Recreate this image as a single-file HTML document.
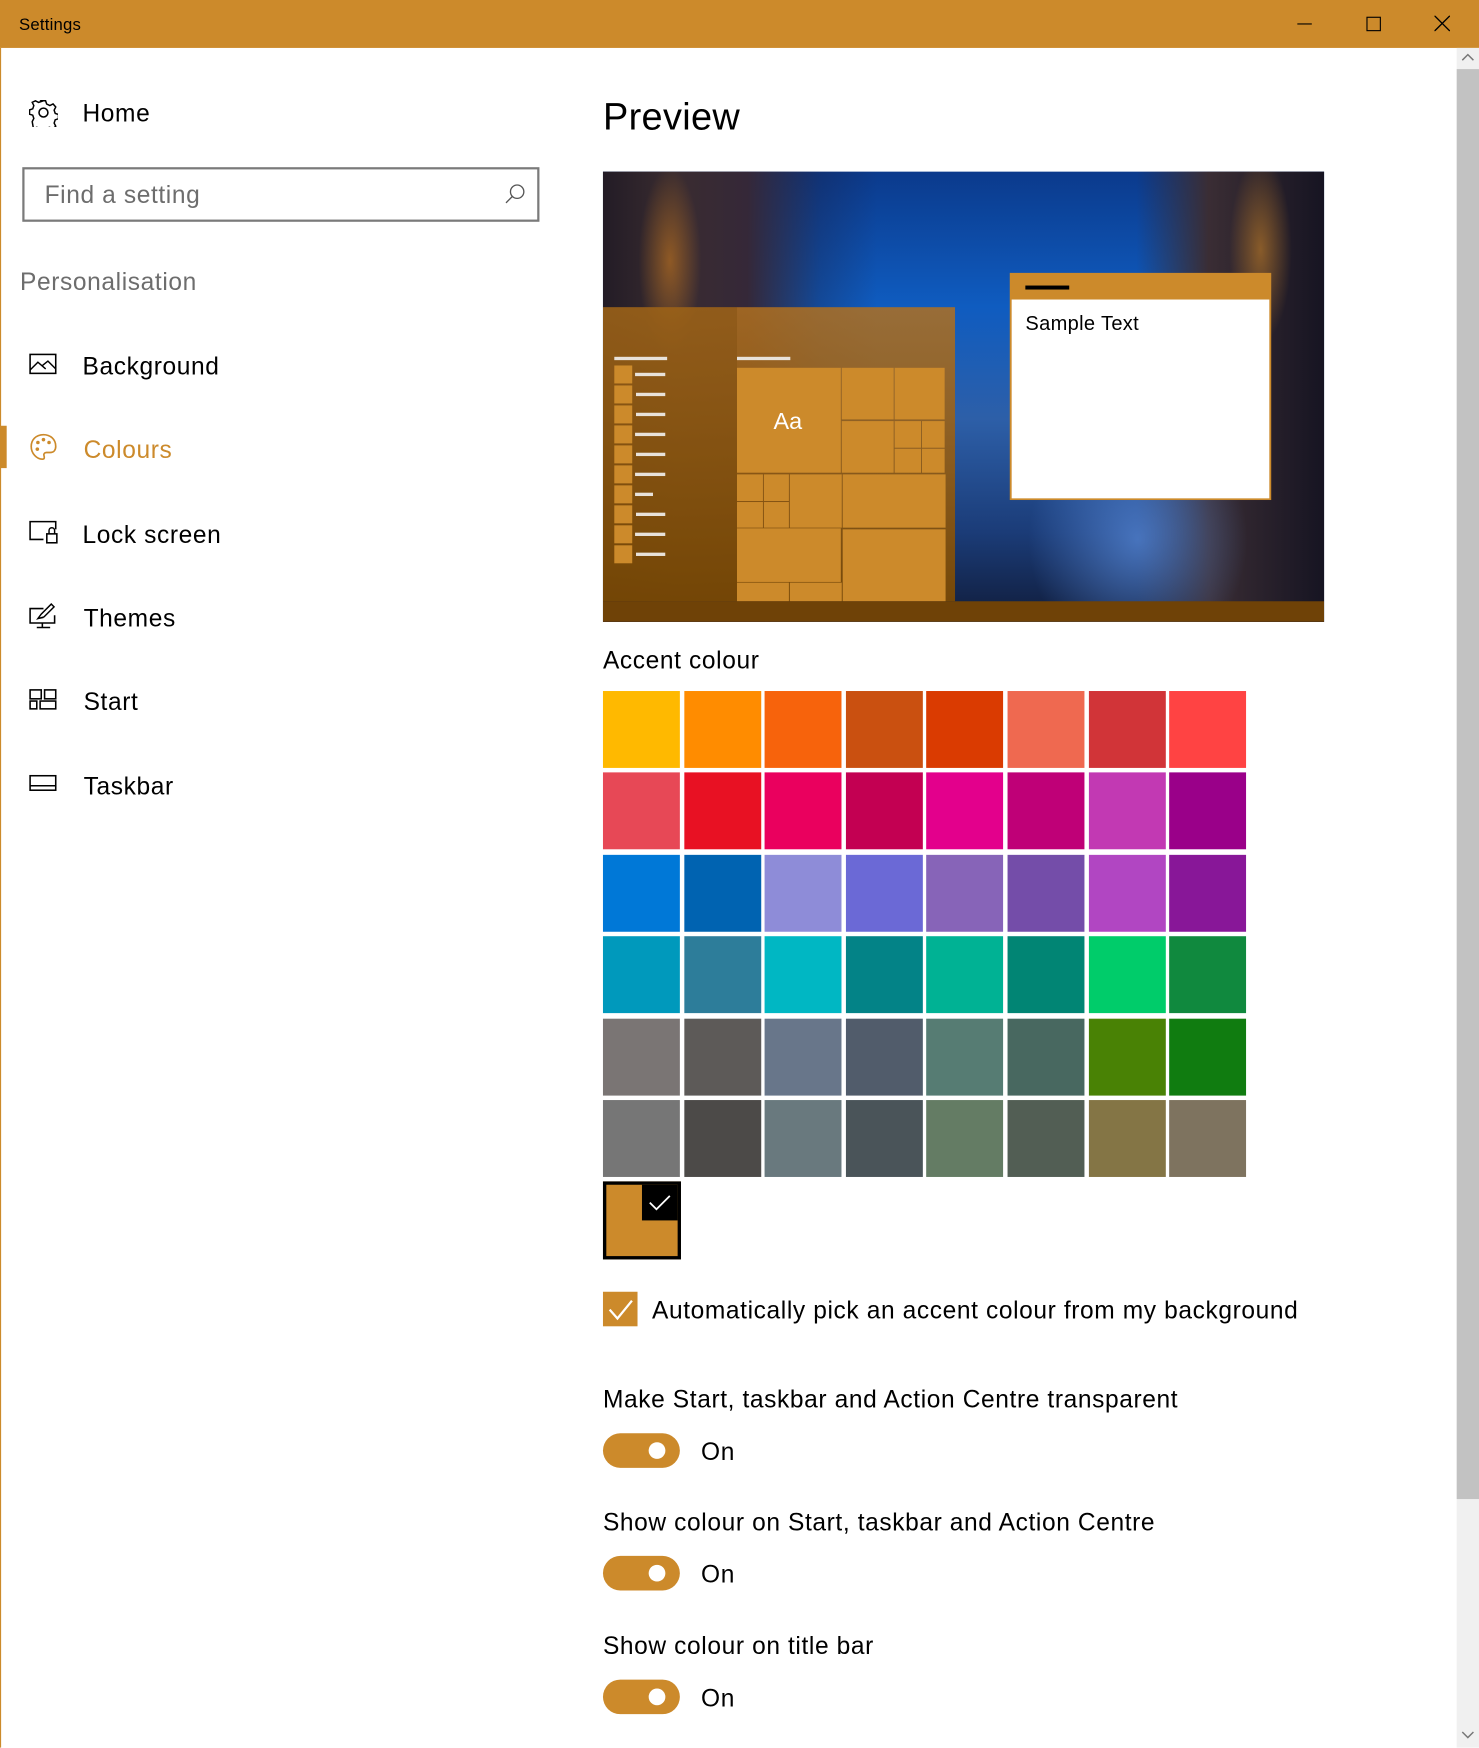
<!DOCTYPE html>
<html><head><meta charset="utf-8">
<style>
html,body{margin:0;padding:0;width:1479px;height:1748px;overflow:hidden;background:#fff;}
#w{position:absolute;left:0;top:0;width:1327px;height:1568px;transform:scale(1.11454);transform-origin:0 0;font-family:"Liberation Sans",sans-serif;color:#000;}
.a{position:absolute;}
.t{position:absolute;white-space:nowrap;line-height:1;}
.f{font-size:22px;letter-spacing:0.55px;}
.tog{position:absolute;left:541px;width:69px;height:31px;border-radius:16px;background:#CC8A2B;}
.tog::after{content:"";position:absolute;right:13px;top:8px;width:15px;height:15px;border-radius:50%;background:#fff;}
.sw{position:absolute;width:69px;height:69px;}
</style></head><body><div id="w">
<div class="a" style="left:0;top:0;width:1327px;height:43px;background:#CC8A2B;"></div>
<div class="t" style="left:17px;top:15px;font-size:15px;letter-spacing:0.2px;">Settings</div>
<div class="a" style="left:1164px;top:21px;width:13px;height:1px;background:#000;"></div>
<div class="a" style="left:1226px;top:15px;width:11px;height:11px;border:1px solid #000;"></div>
<svg class="a" style="left:1287px;top:14px" width="14" height="14"><path d="M0 0L14 14M14 0L0 14" stroke="#000" stroke-width="1.2"/></svg>
<div class="a" style="left:0;top:43px;width:1px;height:1525px;background:#CC8A2B;"></div>
<div class="a" style="left:1307px;top:43px;width:20px;height:1525px;background:#f0f0f0;"></div>
<div class="a" style="left:1307px;top:62px;width:20px;height:1283px;background:#c2c2c2;"></div>
<svg class="a" style="left:1311px;top:47px" width="12" height="8"><path d="M1 7L6 2L11 7" stroke="#777" fill="none" stroke-width="1.3"/></svg>
<svg class="a" style="left:1311px;top:1553px" width="12" height="8"><path d="M1 1L6 6L11 1" stroke="#777" fill="none" stroke-width="1.3"/></svg>

<svg class="a" style="left:26px;top:88px" width="26" height="26" viewBox="0 0 26 26"><g fill="none" stroke="#000" stroke-width="1.4"><circle cx="13" cy="13" r="4"/><path d="M11 2h4l1 3 3 1.5 3-1.5 2.5 2.8-1.5 3 1 3 3 1v4l-3 1-1 3 1.5 3-2.8 2.5-3-1.5-3 1-1 3h-4l-1-3-3-1-3 1.5L2.5 21.5l1.5-3-1-3-3-1v-4l3-1 1-3-1.5-3L5.5 2l3 1.5 3-1z" transform="translate(0.5,0.5) scale(0.96)"/></g></svg>
<div class="t f" style="left:74px;top:91px;">Home</div>
<div class="a" style="left:20px;top:150px;width:460px;height:45px;border:2px solid #7a7a7a;"></div>
<div class="t f" style="left:40px;top:164px;color:#6d6d6d;">Find a setting</div>
<svg class="a" style="left:452px;top:164px" width="20" height="20"><circle cx="12" cy="8" r="6" fill="none" stroke="#555" stroke-width="1.2"/><path d="M8 12L2 18" stroke="#555" stroke-width="1.2"/></svg>
<div class="t f" style="left:18px;top:242px;color:#6d6d6d;">Personalisation</div>

<svg class="a" style="left:26px;top:317px" width="26" height="20"><rect x="1" y="1" width="23" height="17" fill="none" stroke="#000" stroke-width="1.4"/><path d="M1 15L8 8L15 14M12 11l5-4 7 7" fill="none" stroke="#000" stroke-width="1.3"/></svg>
<div class="t f" style="left:74px;top:318px;">Background</div>

<div class="a" style="left:0;top:382px;width:6px;height:38px;background:#CC8A2B;"></div>
<svg class="a" style="left:26px;top:388px" width="26" height="26" viewBox="0 0 26 26"><path d="M13 2C6 2 2 7 2 12.5 2 19 7 24 12 24c2 0 2-1.5 1.5-3-.6-1.6.4-3 2.2-3H19c3 0 5-2 5-5.5C24 6 19 2 13 2z" fill="none" stroke="#CC8A2B" stroke-width="1.5"/><circle cx="8" cy="9" r="1.6" fill="#CC8A2B"/><circle cx="13" cy="6.5" r="1.6" fill="#CC8A2B"/><circle cx="18" cy="9" r="1.6" fill="#CC8A2B"/><circle cx="7.5" cy="15" r="1.6" fill="#CC8A2B"/></svg>
<div class="t f" style="left:75px;top:393px;color:#CC8A2B;">Colours</div>

<svg class="a" style="left:26px;top:467px" width="27" height="22"><path d="M24 8V1H1v16h12" fill="none" stroke="#000" stroke-width="1.4"/><rect x="16" y="12" width="9" height="8" fill="none" stroke="#000" stroke-width="1.4"/><path d="M18 12V9a2.5 2.5 0 0 1 5 0v3" fill="none" stroke="#000" stroke-width="1.3"/></svg>
<div class="t f" style="left:74px;top:469px;">Lock screen</div>

<svg class="a" style="left:26px;top:541px" width="26" height="24"><path d="M13 5H1v13h22v-7M7 22h12M12 18v4" fill="none" stroke="#000" stroke-width="1.4"/><path d="M8 14l3-4 9-9 2.5 2.5-9 9z M8 14l5-1" fill="none" stroke="#000" stroke-width="1.3"/></svg>
<div class="t f" style="left:75px;top:544px;">Themes</div>

<svg class="a" style="left:26px;top:618px" width="26" height="20"><g fill="none" stroke="#000" stroke-width="1.4"><rect x="1" y="1" width="10" height="8"/><rect x="14" y="1" width="10" height="8"/><rect x="1" y="11" width="6" height="7"/><rect x="10" y="11" width="14" height="7"/></g></svg>
<div class="t f" style="left:75px;top:619px;">Start</div>

<svg class="a" style="left:26px;top:695px" width="26" height="16"><rect x="1" y="1" width="23" height="13" fill="none" stroke="#000" stroke-width="1.4"/><path d="M1 10h23" stroke="#000" stroke-width="1.4"/></svg>
<div class="t f" style="left:75px;top:695px;">Taskbar</div>

<div class="t" style="left:541px;top:88px;font-size:34px;letter-spacing:0.3px;">Preview</div>

<div class="a" style="left:541px;top:154px;width:647px;height:404px;overflow:hidden;
background:
radial-gradient(ellipse 40px 120px at 60px 80px, rgba(200,120,30,0.6), rgba(0,0,0,0) 70%),
radial-gradient(ellipse 40px 120px at 590px 70px, rgba(200,130,40,0.6), rgba(0,0,0,0) 70%),
radial-gradient(ellipse 140px 160px at 480px 330px, rgba(90,140,220,0.7), rgba(0,0,0,0) 70%),
linear-gradient(90deg,#231c26 0%,#3a2c30 10%,#352838 20%,rgba(30,30,60,0.3) 30%,rgba(0,0,0,0) 38%,rgba(0,0,0,0) 74%,#3a2d34 84%,#161422 100%),
linear-gradient(180deg,#0b3a8c 0%,#0f5cc0 30%,#2d5fa8 55%,#1b3c78 80%,#101c3a 100%);">
<svg style="position:absolute;left:0;top:0" width="647" height="404" viewBox="6 36 1528 1352" preserveAspectRatio="none">
<defs><linearGradient id="sp" x1="0" y1="0" x2="0" y2="1"><stop offset="0" stop-color="#b07020" stop-opacity="0.85"/><stop offset="1" stop-color="#7a4a05" stop-opacity="0.95"/></linearGradient></defs>
<rect x="6" y="443" width="746" height="883" fill="url(#sp)"/>
<rect x="6" y="443" width="284" height="883" fill="#6b3e02" opacity="0.25"/>
<rect x="30" y="592" width="112" height="10" fill="#e8e2da"/>
<rect x="290" y="592" width="113" height="10" fill="#e8e2da"/>
<g fill="#CC8A2B">
<rect x="30" y="618" width="38" height="54"/><rect x="30" y="678" width="38" height="54"/><rect x="30" y="738" width="38" height="54"/><rect x="30" y="798" width="38" height="54"/><rect x="30" y="858" width="38" height="54"/><rect x="30" y="918" width="38" height="54"/><rect x="30" y="978" width="38" height="54"/><rect x="30" y="1038" width="38" height="54"/><rect x="30" y="1098" width="38" height="54"/><rect x="30" y="1158" width="38" height="54"/>
</g>
<g fill="#e8e2da">
<rect x="74" y="640" width="64" height="10"/><rect x="76" y="700" width="62" height="10"/><rect x="76" y="760" width="62" height="10"/><rect x="74" y="820" width="64" height="10"/><rect x="76" y="880" width="62" height="10"/><rect x="74" y="940" width="64" height="10"/><rect x="74" y="1000" width="38" height="10"/><rect x="76" y="1060" width="62" height="10"/><rect x="74" y="1120" width="64" height="10"/><rect x="76" y="1180" width="62" height="10"/>
</g>
<g fill="#CC8A2B">
<rect x="290" y="625" width="220" height="315"/>
<rect x="512" y="625" width="110" height="155"/><rect x="624" y="625" width="106" height="155"/>
<rect x="512" y="785" width="110" height="155"/>
<rect x="624" y="785" width="56" height="80"/><rect x="682" y="785" width="48" height="80"/>
<rect x="624" y="868" width="56" height="72"/><rect x="682" y="868" width="48" height="72"/>
<rect x="290" y="945" width="55" height="80"/><rect x="347" y="945" width="53" height="80"/>
<rect x="290" y="1028" width="55" height="77"/><rect x="347" y="1028" width="53" height="77"/>
<rect x="402" y="945" width="110" height="160"/><rect x="514" y="945" width="218" height="160"/>
<rect x="290" y="1107" width="220" height="161"/><rect x="514" y="1110" width="218" height="216"/>
<rect x="290" y="1270" width="110" height="56"/><rect x="402" y="1270" width="110" height="56"/>
</g>
<rect x="6" y="1326" width="1528" height="62" fill="#6f4207"/>
<rect x="868" y="340" width="554" height="682" fill="#CC8A2B"/>
<rect x="872" y="420" width="546" height="597" fill="#fff"/>
<rect x="901" y="378" width="93" height="12" fill="#000"/>
</svg>
<div class="t" style="left:153px;top:214px;font-size:21px;color:#fff;">Aa</div>
<div class="t" style="left:379px;top:127px;font-size:18px;letter-spacing:0.3px;">Sample Text</div>
</div>

<div class="t f" style="left:541px;top:582px;">Accent colour</div>

<div class="sw" style="left:541px;top:620px;background:#FFB900"></div><div class="sw" style="left:614px;top:620px;background:#FF8C00"></div><div class="sw" style="left:686px;top:620px;background:#F7630C"></div><div class="sw" style="left:759px;top:620px;background:#CA5010"></div><div class="sw" style="left:831px;top:620px;background:#DA3B01"></div><div class="sw" style="left:904px;top:620px;background:#EF6950"></div><div class="sw" style="left:977px;top:620px;background:#D13438"></div><div class="sw" style="left:1049px;top:620px;background:#FF4343"></div>
<div class="sw" style="left:541px;top:693px;background:#E74856"></div><div class="sw" style="left:614px;top:693px;background:#E81123"></div><div class="sw" style="left:686px;top:693px;background:#EA005E"></div><div class="sw" style="left:759px;top:693px;background:#C30052"></div><div class="sw" style="left:831px;top:693px;background:#E3008C"></div><div class="sw" style="left:904px;top:693px;background:#BF0077"></div><div class="sw" style="left:977px;top:693px;background:#C239B3"></div><div class="sw" style="left:1049px;top:693px;background:#9A0089"></div>
<div class="sw" style="left:541px;top:767px;background:#0078D7"></div><div class="sw" style="left:614px;top:767px;background:#0063B1"></div><div class="sw" style="left:686px;top:767px;background:#8E8CD8"></div><div class="sw" style="left:759px;top:767px;background:#6B69D6"></div><div class="sw" style="left:831px;top:767px;background:#8764B8"></div><div class="sw" style="left:904px;top:767px;background:#744DA9"></div><div class="sw" style="left:977px;top:767px;background:#B146C2"></div><div class="sw" style="left:1049px;top:767px;background:#881798"></div>
<div class="sw" style="left:541px;top:840px;background:#0099BC"></div><div class="sw" style="left:614px;top:840px;background:#2D7D9A"></div><div class="sw" style="left:686px;top:840px;background:#00B7C3"></div><div class="sw" style="left:759px;top:840px;background:#038387"></div><div class="sw" style="left:831px;top:840px;background:#00B294"></div><div class="sw" style="left:904px;top:840px;background:#018574"></div><div class="sw" style="left:977px;top:840px;background:#00CC6A"></div><div class="sw" style="left:1049px;top:840px;background:#10893E"></div>
<div class="sw" style="left:541px;top:914px;background:#7A7574"></div><div class="sw" style="left:614px;top:914px;background:#5D5A58"></div><div class="sw" style="left:686px;top:914px;background:#68768A"></div><div class="sw" style="left:759px;top:914px;background:#515C6B"></div><div class="sw" style="left:831px;top:914px;background:#567C73"></div><div class="sw" style="left:904px;top:914px;background:#486860"></div><div class="sw" style="left:977px;top:914px;background:#498205"></div><div class="sw" style="left:1049px;top:914px;background:#107C10"></div>
<div class="sw" style="left:541px;top:987px;background:#767676"></div><div class="sw" style="left:614px;top:987px;background:#4C4A48"></div><div class="sw" style="left:686px;top:987px;background:#69797E"></div><div class="sw" style="left:759px;top:987px;background:#4A5459"></div><div class="sw" style="left:831px;top:987px;background:#647C64"></div><div class="sw" style="left:904px;top:987px;background:#525E54"></div><div class="sw" style="left:977px;top:987px;background:#847545"></div><div class="sw" style="left:1049px;top:987px;background:#7E735F"></div>

<div class="a" style="left:541px;top:1060px;width:64px;height:64px;border:3px solid #000;background:#CC8A2B;"></div>
<div class="a" style="left:576px;top:1063px;width:32px;height:32px;background:#000;"></div>
<svg class="a" style="left:581px;top:1070px" width="22" height="18"><path d="M2 9l6 6L20 3" fill="none" stroke="#fff" stroke-width="1.6"/></svg>

<div class="a" style="left:541px;top:1159px;width:31px;height:31px;background:#CC8A2B;"></div>
<svg class="a" style="left:544px;top:1163px" width="26" height="24"><path d="M3 12l7 8L23 4" fill="none" stroke="#fff" stroke-width="2"/></svg>
<div class="t f" style="left:585px;top:1165px;">Automatically pick an accent colour from my background</div>

<div class="t f" style="left:541px;top:1245px;">Make Start, taskbar and Action Centre transparent</div>
<div class="tog" style="top:1286px;"></div>
<div class="t f" style="left:629px;top:1292px;">On</div>

<div class="t f" style="left:541px;top:1355px;">Show colour on Start, taskbar and Action Centre</div>
<div class="tog" style="top:1396px;"></div>
<div class="t f" style="left:629px;top:1402px;">On</div>

<div class="t f" style="left:541px;top:1466px;">Show colour on title bar</div>
<div class="tog" style="top:1507px;"></div>
<div class="t f" style="left:629px;top:1513px;">On</div>
</div></body></html>
